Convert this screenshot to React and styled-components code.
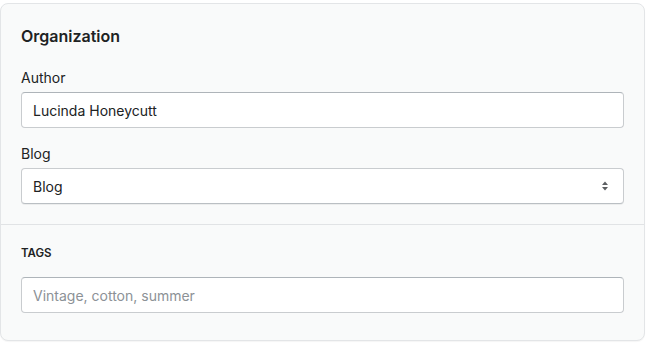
import styled, { createGlobalStyle } from "styled-components";

const GlobalStyle = createGlobalStyle`
    body {
        margin: 0;
        background: #ffffff;
        font-family: Inter, "Liberation Sans", Arial, sans-serif;
        color: #202223;
    }
`;

const Page = styled.div`
    padding: 3px 5px 5px 0;
`;

const Card = styled.div`
    background: #f9fafa;
    border: 1px solid #e3e5e7;
    border-radius: 8px;
    box-shadow: 0 1px 1px rgba(0, 0, 0, 0.04);
    overflow: hidden;
`;

const Section = styled.div`
    display: flex;
    flex-direction: column;
    padding: ${(props) => (props.last ? "20px 20px 27px" : "20px")};
    border-top: ${(props) => (props.last ? "1px solid #e1e3e5" : "none")};
`;

const Heading = styled.h2`
    margin: 0 0 20px;
    font-size: 16px;
    line-height: 24px;
    font-weight: 600;
`;

const Label = styled.label`
    font-size: 14px;
    line-height: 20px;
    margin-bottom: 4px;
`;

const Subheading = styled.h3`
    margin: 0 0 16px;
    font-size: 11.5px;
    line-height: 16px;
    font-weight: 600;
    text-transform: uppercase;
`;

const Field = styled.div`
    display: flex;
    flex-direction: column;
    margin-top: ${(props) => (props.spaced ? "16px" : "0")};
`;

const Input = styled.input`
    box-sizing: border-box;
    height: 36px;
    width: 100%;
    padding: 0 11px;
    border: 1px solid #c9cccf;
    border-top-color: #aeb4b9;
    border-radius: 4px;
    background: #ffffff;
    font-family: Inter, "Liberation Sans", Arial, sans-serif;
    font-size: 14px;
    color: #202223;
    outline: none;

    &::placeholder {
        color: #8c9196;
    }
`;

const SelectBox = styled.div`
    box-sizing: border-box;
    height: 36px;
    display: flex;
    align-items: center;
    justify-content: space-between;
    padding: 0 14px 0 11px;
    border: 1px solid #c9cccf;
    border-bottom-color: #babfc3;
    border-radius: 4px;
    background: #ffffff;
    box-shadow: 0 1px 0 rgba(0, 0, 0, 0.05);
    font-size: 14px;
`;

const Arrows = () => (
    <svg width="8" height="10" viewBox="0 0 8 10">
        <path d="M4 0.5 L7 4 H1 Z" fill="#5c5f62" />
        <path d="M4 9.5 L7 6 H1 Z" fill="#5c5f62" />
    </svg>
);

export default function App() {
    return (
        <>
            <GlobalStyle />
            <Page>
                <Card>
                    <Section>
                        <Heading>Organization</Heading>
                        <Field>
                            <Label>Author</Label>
                            <Input defaultValue="Lucinda Honeycutt" />
                        </Field>
                        <Field spaced>
                            <Label>Blog</Label>
                            <SelectBox>
                                <span>Blog</span>
                                <Arrows />
                            </SelectBox>
                        </Field>
                    </Section>
                    <Section last>
                        <Subheading>Tags</Subheading>
                        <Input placeholder="Vintage, cotton, summer" />
                    </Section>
                </Card>
            </Page>
        </>
    );
}
